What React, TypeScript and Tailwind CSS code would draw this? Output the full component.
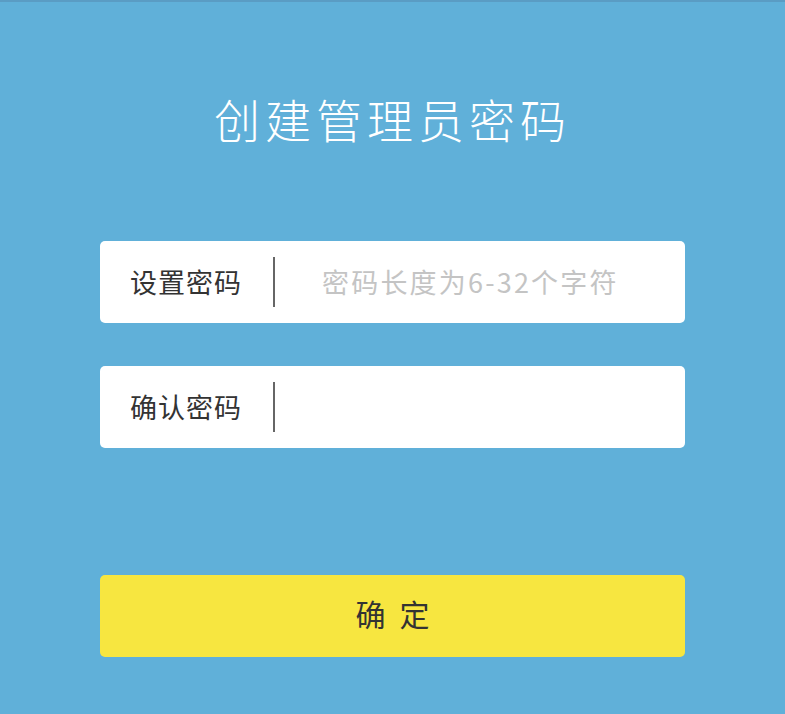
export default function App() {
  const font = { fontFamily: '"Noto Sans CJK SC", "Noto Sans", sans-serif' }
  return (
    <div
      className="w-[785px] h-[714px] bg-[#60b0d9] border-t-2 border-[#5a9cc4] flex flex-col px-[100px] pt-[86px]"
      style={font}
    >
      <h1 className="text-center text-white text-[46px] font-light tracking-[5px] leading-[60px]">
        创建管理员密码
      </h1>

      <div className="mt-[93px] h-[82px] bg-white rounded-[5px] flex items-center pl-[30px]">
        <span className="text-[27px] text-[#333] w-[143px] tracking-[1px]">设置密码</span>
        <span className="w-[2px] h-[50px] bg-[#666]" />
        <span className="ml-[47px] text-[27px] text-[#c4c4c4] tracking-[2.2px]">密码长度为6-32个字符</span>
      </div>

      <div className="mt-[43px] h-[82px] bg-white rounded-[5px] flex items-center pl-[30px]">
        <span className="text-[27px] text-[#333] w-[143px] tracking-[1px]">确认密码</span>
        <span className="w-[2px] h-[50px] bg-[#666]" />
      </div>

      <button className="mt-[127px] h-[82px] bg-[#f7e640] rounded-[5px] flex items-center justify-center text-[30px] text-[#333] tracking-[14px] pl-[14px] pb-[6px]">
        确定
      </button>
    </div>
  )
}
